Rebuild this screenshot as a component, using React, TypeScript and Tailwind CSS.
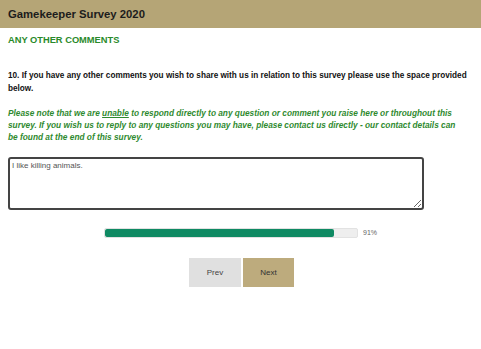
import React, { useState } from "react";

const App: React.FC = () => {
  const [comment, setComment] = useState("I like killing animals.");
  const progress = 91;

  return (
    <div className="min-h-screen w-full bg-white font-['Liberation_Sans',Arial,sans-serif]">
      {/* Header */}
      <div className="h-[28px] bg-[#b5a576] px-2 flex items-center">
        <h1 className="text-[11.3px] font-bold text-[#1c1c1c]">Gamekeeper Survey 2020</h1>
      </div>

      {/* Body */}
      <div className="px-2">
        <h2 className="mt-[6px] text-[9.3px] font-bold text-[#2a8a2a]">ANY OTHER COMMENTS</h2>

        <p className="mt-[21px] text-[8.2px] font-bold leading-[13px] text-[#111]">
          10. If you have any other comments you wish to share with us in relation to this survey please use the space provided below.
        </p>

        <p className="mt-[12px] text-[8.3px] font-bold italic leading-[12px] text-[#2f8a2f] pr-[6px]">
          Please note that we are <span className="underline">unable</span> to respond directly to any question or comment you raise here or throughout this survey. If you wish us to reply to any questions you may have, please contact us directly - our contact details can be found at the end of this survey.
        </p>

        <textarea
          value={comment}
          spellCheck={false}
          onChange={(e) => setComment(e.target.value)}
          className="mt-[14px] block w-[416px] h-[53px] border-2 border-[#444] rounded-[3px] px-[2px] py-[1px] text-[8px] text-[#555] font-['Liberation_Sans',Arial,sans-serif] outline-none"
        />

        {/* Progress */}
        <div className="mt-[18px] flex items-center justify-center">
          <div className="w-[254px] h-[10px] rounded-[2px] bg-[#eeeeee] border border-[#e2e2e2] overflow-hidden">
            <div className="h-full bg-[#0f8a63] rounded-[2px]" style={{ width: `${progress}%` }} />
          </div>
          <span className="ml-[5px] text-[7px] text-[#666]">{progress}%</span>
        </div>

        {/* Buttons */}
        <div className="mt-[20px] flex justify-center gap-[2px] pl-[2px]">
          <button className="w-[52px] h-[29px] bg-[#e0e0e0] text-[8px] text-[#444]">Prev</button>
          <button className="w-[51px] h-[29px] bg-[#bdab7d] text-[8px] text-[#333]">Next</button>
        </div>
      </div>
    </div>
  );
};

export default App;
